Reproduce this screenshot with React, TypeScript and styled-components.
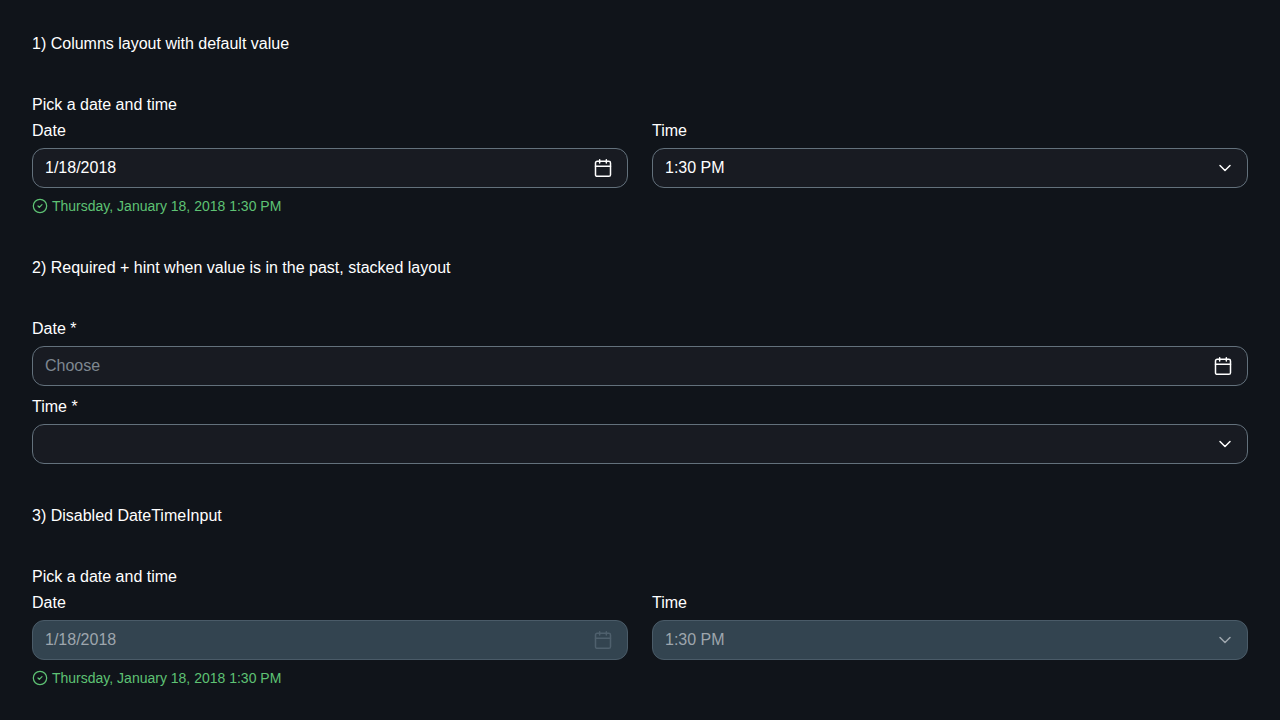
import React, { useId, useState } from 'react';
import styled, { createGlobalStyle } from 'styled-components';

const GlobalStyle = createGlobalStyle`
  body {
    margin: 0;
    background: #10141a;
    color: #ffffff;
    font-family: 'Liberation Sans', Arial, sans-serif;
    font-size: 16px;
    line-height: 18px;
  }

  *, *::before, *::after {
    box-sizing: border-box;
  }
`;

const Page = styled.main`
  display: flex;
  flex-direction: column;
  gap: 40px;
  padding: 32px;
`;

const Example = styled.section`
  display: flex;
  flex-direction: column;
  gap: 40px;
`;

const Caption = styled.p`
  margin: 0;
  line-height: 24px;
`;

const Group = styled.fieldset`
  margin: 0;
  padding: 0;
  border: 0;
  min-width: 0;
`;

const Legend = styled.legend`
  padding: 0;
  margin-bottom: 8px;
`;

const Fields = styled.div<{ $stacked?: boolean }>`
  display: grid;
  grid-template-columns: ${(p) => (p.$stacked ? '1fr' : '1fr 1fr')};
  gap: ${(p) => (p.$stacked ? '12px' : '24px')};
`;

const Field = styled.div`
  display: flex;
  flex-direction: column;
  gap: 8px;
  min-width: 0;
`;

const Label = styled.label`
  display: block;
`;

const Control = styled.div<{ $disabled?: boolean }>`
  display: grid;
  grid-template-columns: minmax(0, 1fr) auto;
  align-items: center;
  height: 40px;
  border: 1px solid ${(p) => (p.$disabled ? '#4a5b68' : '#63717c')};
  border-radius: 12px;
  background: ${(p) => (p.$disabled ? '#334450' : '#181b22')};
  color: ${(p) => (p.$disabled ? '#9ea6ad' : '#ffffff')};
`;

const TextBox = styled.input`
  width: 100%;
  height: 38px;
  padding: 0 12px;
  border: 0;
  outline: 0;
  border-radius: 12px;
  background: transparent;
  color: inherit;
  font: inherit;

  &::placeholder {
    color: #7e8790;
    opacity: 1;
  }
`;

const Picker = styled.select`
  grid-area: 1 / 1 / 2 / 3;
  appearance: none;
  width: 100%;
  height: 38px;
  padding: 0 40px 0 12px;
  border: 0;
  outline: 0;
  border-radius: 12px;
  background: transparent;
  color: inherit;
  font: inherit;
  opacity: 1;

  option {
    background: #181b22;
  }
`;

const Arrow = styled.span`
  grid-area: 1 / 2 / 2 / 3;
  display: flex;
  margin-right: 12px;
  pointer-events: none;
`;

const CalendarButton = styled.button`
  display: flex;
  align-items: center;
  justify-content: center;
  width: 32px;
  height: 32px;
  margin-right: 8px;
  padding: 0;
  border: 0;
  border-radius: 8px;
  background: transparent;
  color: #ffffff;
  cursor: pointer;

  &:disabled {
    color: #4f606d;
    cursor: not-allowed;
  }
`;

const Message = styled.div`
  display: flex;
  align-items: center;
  gap: 4px;
  margin-top: 8px;
  color: #5ec274;
  font-size: 14px;
  line-height: 20px;
`;

const Icon = styled.svg`
  display: block;
  flex: none;
  fill: none;
  stroke: currentColor;
  stroke-linecap: round;
  stroke-linejoin: round;
`;

const CalendarIcon = () => (
  <Icon width="20" height="20" viewBox="0 0 24 24" strokeWidth="1.8" aria-hidden="true">
    <path d="M8 2v4M16 2v4M3 10h18" />
    <rect x="3" y="4" width="18" height="18" rx="2" />
  </Icon>
);

const ChevronIcon = () => (
  <Icon width="20" height="20" viewBox="0 0 24 24" strokeWidth="1.8" aria-hidden="true">
    <path d="m6 9 6 6 6-6" />
  </Icon>
);

const CheckIcon = () => (
  <Icon width="16" height="16" viewBox="0 0 24 24" strokeWidth="1.9" aria-hidden="true">
    <circle cx="12" cy="12" r="10" />
    <path d="m9 12 2 2 4-4" />
  </Icon>
);

interface FieldProps {
  label: string;
  initial?: string;
  disabled?: boolean;
  required?: boolean;
}

function DateField({ label, initial = '', disabled, required }: FieldProps) {
  const id = useId();
  const [value, setValue] = useState(initial);
  return (
    <Field>
      <Label htmlFor={id}>{label}</Label>
      <Control $disabled={disabled}>
        <TextBox
          id={id}
          type="text"
          placeholder="Choose"
          value={value}
          disabled={disabled}
          required={required}
          onChange={(e) => setValue(e.target.value)}
        />
        <CalendarButton type="button" aria-label="Open calendar" disabled={disabled}>
          <CalendarIcon />
        </CalendarButton>
      </Control>
    </Field>
  );
}

function TimeField({ label, initial = '', disabled, required }: FieldProps) {
  const id = useId();
  return (
    <Field>
      <Label htmlFor={id}>{label}</Label>
      <Control $disabled={disabled}>
        <Picker id={id} defaultValue={initial} disabled={disabled} required={required}>
          <option value="" />
          <option>1:00 PM</option>
          <option>1:30 PM</option>
          <option>2:00 PM</option>
        </Picker>
        <Arrow>
          <ChevronIcon />
        </Arrow>
      </Control>
    </Field>
  );
}

function DateTimeColumns({ disabled }: { disabled?: boolean }) {
  return (
    <Group>
      <Legend>Pick a date and time</Legend>
      <Fields>
        <DateField label="Date" initial="1/18/2018" disabled={disabled} />
        <TimeField label="Time" initial="1:30 PM" disabled={disabled} />
      </Fields>
      <Message>
        <CheckIcon />
        <span>Thursday, January 18, 2018 1:30 PM</span>
      </Message>
    </Group>
  );
}

export default function App() {
  return (
    <>
      <GlobalStyle />
      <Page>
        <Example>
          <Caption>1) Columns layout with default value</Caption>
          <DateTimeColumns />
        </Example>
        <Example>
          <Caption>2) Required + hint when value is in the past, stacked layout</Caption>
          <Group>
            <Fields $stacked>
              <DateField label="Date *" required />
              <TimeField label="Time *" required />
            </Fields>
          </Group>
        </Example>
        <Example>
          <Caption>3) Disabled DateTimeInput</Caption>
          <DateTimeColumns disabled />
        </Example>
      </Page>
    </>
  );
}
